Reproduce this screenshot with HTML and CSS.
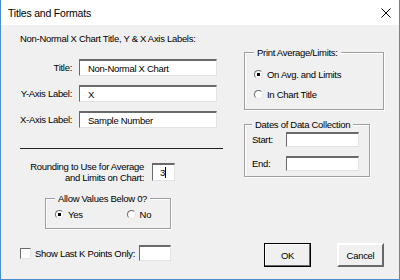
FILE: index.html
```html
<!DOCTYPE html>
<html lang="en">
  <head>
    <meta charset="UTF-8" />
    <title>Titles and Formats</title>
    <link rel="stylesheet" href="styles.css">
  </head>
  <body>
    <div class="window">
      <div class="titlebar">
        <span class="title">Titles and Formats</span>
        <svg class="close" width="10" height="10" viewBox="0 0 10 10">
          <path d="M0.5 0.5 L9.5 9.5 M9.5 0.5 L0.5 9.5" stroke="#000" stroke-width="1" fill="none" />
        </svg>
      </div>

      <div class="dialog">
        <div class="left">
          <p class="heading">Non-Normal X Chart Title, Y &amp; X Axis Labels:</p>

          <div class="fields">
            <span class="field-label">Title:</span>
            <div class="textbox wide">Non-Normal X Chart</div>
            <span class="field-label">Y-Axis Label:</span>
            <div class="textbox wide">X</div>
            <span class="field-label">X-Axis Label:</span>
            <div class="textbox wide">Sample Number</div>
          </div>

          <div class="separator"></div>

          <div class="rounding">
            <div class="rounding-label">Rounding to Use for Average<br />and Limits on Chart:</div>
            <div class="textbox digits">3<span class="caret"></span></div>
          </div>

          <fieldset class="group allow">
            <legend>Allow Values Below 0?</legend>
            <div class="options-row">
              <label class="option"><span class="radio checked"></span>Yes</label>
              <label class="option"><span class="radio"></span>No</label>
            </div>
          </fieldset>

          <div class="last-k">
            <span class="checkbox"></span>
            <span class="last-k-label">Show Last K Points Only:</span>
            <div class="textbox k"></div>
          </div>
        </div>

        <div class="right">
          <fieldset class="group print">
            <legend>Print Average/Limits:</legend>
            <label class="option"><span class="radio checked"></span>On Avg. and Limits</label>
            <label class="option"><span class="radio"></span>In Chart Title</label>
          </fieldset>

          <fieldset class="group dates">
            <legend>Dates of Data Collection</legend>
            <div class="date-row">
              <span class="date-label">Start:</span>
              <div class="textbox date"></div>
            </div>
            <div class="date-row">
              <span class="date-label">End:</span>
              <div class="textbox date"></div>
            </div>
          </fieldset>

          <div class="buttons">
            <button class="btn default">OK</button>
            <button class="btn">Cancel</button>
          </div>
        </div>
      </div>
    </div>
  </body>
</html>
```

FILE: styles.css
```css
body {
  margin: 0;
  font-family: "Liberation Sans", Arial, sans-serif;
  font-size: 9.5px;
  letter-spacing: -0.3px;
  color: #000;
  white-space: nowrap;
}

.window {
  width: 400px;
  height: 280px;
  box-sizing: border-box;
  border: 1px solid #4d8bd0;
  border-top: none;
  background-color: #f0f0f0;
  display: flex;
  flex-direction: column;
  overflow: hidden;
}

.titlebar {
  height: 25px;
  background-color: #fff;
  display: flex;
  align-items: center;
  justify-content: space-between;
  padding: 0 7px;
  flex-shrink: 0;
}

.title {
  font-size: 10.5px;
  letter-spacing: -0.2px;
}

.close {
  margin-right: 1px;
}

.dialog {
  display: flex;
  padding-left: 19px;
  gap: 21px;
}

.left {
  width: 203px;
  padding-top: 7px;
}

.heading {
  margin: 0;
  line-height: 13px;
}

.fields {
  display: grid;
  grid-template-columns: 52px 138px;
  column-gap: 7px;
  row-gap: 9px;
  align-items: center;
  margin-top: 14px;
}

.field-label {
  text-align: right;
}

.textbox {
  box-sizing: border-box;
  background-color: #fff;
  border: 1px solid #e3e3e3;
  border-top: 2px solid #6a6a6a;
  border-left: 1px solid #6a6a6a;
  display: flex;
  align-items: center;
}

.textbox.wide {
  height: 17px;
  padding-left: 8px;
}

.separator {
  height: 1px;
  background-color: #222;
  margin-top: 20px;
}

.rounding {
  display: flex;
  align-items: center;
  gap: 8px;
  margin-top: 12px;
}

.rounding-label {
  width: 124px;
  text-align: right;
  line-height: 11px;
}

.textbox.digits {
  width: 23px;
  height: 18px;
  padding-left: 7px;
}

.caret {
  width: 1px;
  height: 11px;
  background-color: #000;
}

.group {
  margin: 0;
  padding: 0 8px;
  border: 1px solid #a0a0a0;
  box-shadow: inset 1px 1px #fff, 1px 1px #fff;
}

.group legend {
  padding: 0 3px;
  line-height: 13px;
  background-color: #f0f0f0;
}

.allow {
  width: 126px;
  box-sizing: border-box;
  margin: 9px 0 0 25px;
  padding: 3px 8px 7px 9px;
}

.options-row {
  display: flex;
  gap: 44px;
}

.option {
  display: flex;
  align-items: center;
  gap: 4px;
  line-height: 13px;
}

.radio {
  width: 9px;
  height: 9px;
  box-sizing: border-box;
  border-radius: 50%;
  border: 1px solid;
  border-color: #6d6d6d #e6e6e6 #e6e6e6 #6d6d6d;
  background-color: #fff;
}

.radio.checked {
  background: radial-gradient(circle, #000 0 1.5px, #fff 2px);
}

.last-k {
  display: flex;
  align-items: center;
  margin-top: 16px;
}

.checkbox {
  width: 11px;
  height: 11px;
  box-sizing: border-box;
  background-color: #fff;
  border: 1px solid;
  border-color: #6d6d6d #e6e6e6 #e6e6e6 #6d6d6d;
}

.last-k-label {
  margin-left: 4px;
}

.textbox.k {
  width: 32px;
  height: 16px;
  margin-left: 4px;
}

.right {
  width: 140px;
  display: flex;
  flex-direction: column;
}

.print {
  width: 140px;
  box-sizing: border-box;
  margin-top: 21px;
  padding: 9px 8px 8px 9px;
  display: flex;
  flex-direction: column;
  gap: 7px;
}

.dates {
  width: 126px;
  box-sizing: border-box;
  margin-top: 8px;
  padding: 1px 8px 5px 7px;
  display: flex;
  flex-direction: column;
  gap: 9px;
}

.date-row {
  display: flex;
  align-items: center;
}

.date-label {
  width: 34px;
}

.textbox.date {
  width: 73px;
  height: 15px;
}

.buttons {
  display: flex;
  justify-content: flex-end;
  gap: 26px;
  margin-top: 66px;
}

.btn {
  width: 47px;
  height: 24px;
  box-sizing: border-box;
  font-family: inherit;
  font-size: inherit;
  letter-spacing: inherit;
  background-color: #f0f0f0;
  border: 2px solid;
  border-color: #fff #696969 #696969 #fff;
  padding: 0;
}

.btn.default {
  border: 1px solid #000;
  box-shadow: inset -1px -1px #696969, inset 1px 1px #fff;
}
```
